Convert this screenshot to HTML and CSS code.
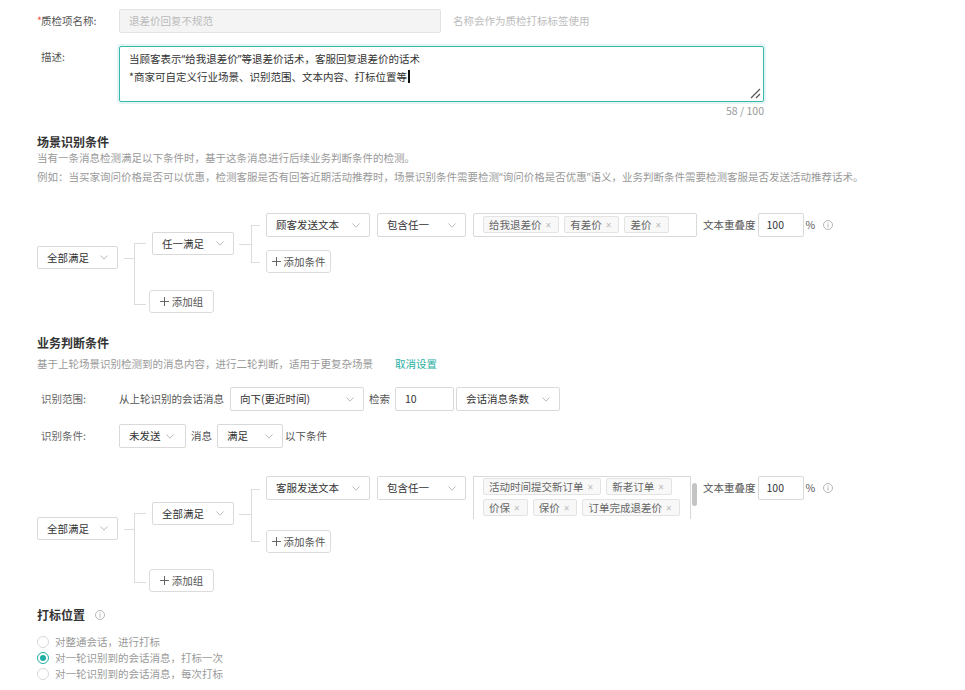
FILE: index.html
```html
<!DOCTYPE html>
<html lang="zh-CN">
<head>
<meta charset="utf-8">
<title>质检项</title>
<link rel="stylesheet" href="styles.css">
</head>
<body>
<div class="page">
  <div class="row row-name">
    <div class="label"><span class="req">*</span>质检项名称:</div>
    <div class="input input-disabled">退差价回复不规范</div>
    <div class="hint">名称会作为质检打标标签使用</div>
  </div>

  <div class="row row-desc">
    <div class="label label-top">描述:</div>
    <div class="textarea">
      <div class="ta-text">
        <div>当顾客表示<span class="q">“</span>给我退差价<span class="q">”</span>等退差价话术，客服回复退差价的话术</div>
        <div>*商家可自定义行业场景、识别范围、文本内容、打标位置等<span class="caret"></span></div>
      </div>
      <svg class="resize" width="12" height="12" viewBox="0 0 12 12"><path d="M11 2L2 11M11 7L7 11" stroke="#555" stroke-width="1.2" fill="none"/></svg>
    </div>
  </div>
  <div class="counter">58 / 100</div>

  <h3 class="title t-scene">场景识别条件</h3>
  <div class="desc">
    <div>当有一条消息检测满足以下条件时，基于这条消息进行后续业务判断条件的检测。</div>
    <div>例如：当买家询问价格是否可以优惠，检测客服是否有回答近期活动推荐时，场景识别条件需要检测<span class="q">“</span>询问价格是否优惠<span class="q">”</span>语义，业务判断条件需要检测客服是否发送活动推荐话术。</div>
  </div>

  <div class="tree t1">
    <div class="sel root">全部满足<svg class="arr" width="8" height="5" viewBox="0 0 8 5"><path d="M0.5 0.5L4 4.2L7.5 0.5" fill="none" stroke="#bbb"/></svg></div>
    <div class="hl hl-root"></div>
    <div class="br br-outer"></div>
    <div class="col">
      <div class="grp">
        <div class="sel grp-sel">任一满足<svg class="arr" width="8" height="5" viewBox="0 0 8 5"><path d="M0.5 0.5L4 4.2L7.5 0.5" fill="none" stroke="#bbb"/></svg></div>
        <div class="hl hl-grp"></div>
        <div class="br br-inner"></div>
        <div class="conds">
          <div class="cond-row">
            <div class="sel sel-field">顾客发送文本<svg class="arr" width="8" height="5" viewBox="0 0 8 5"><path d="M0.5 0.5L4 4.2L7.5 0.5" fill="none" stroke="#bbb"/></svg></div>
            <div class="sel sel-op">包含任一<svg class="arr" width="8" height="5" viewBox="0 0 8 5"><path d="M0.5 0.5L4 4.2L7.5 0.5" fill="none" stroke="#bbb"/></svg></div>
            <div class="tags tags-single">
              <span class="tag">给我退差价<span class="x">×</span></span>
              <span class="tag">有差价<span class="x">×</span></span>
              <span class="tag">差价<span class="x">×</span></span>
            </div>
            <div class="overlap">文本重叠度</div>
            <div class="input num">100</div>
            <div class="pct">%</div>
            <svg class="info" width="10" height="10" viewBox="0 0 10 10"><circle cx="5" cy="5" r="4.5" fill="none" stroke="#b5b5b5"/><path d="M5 4.2v3.3" stroke="#b5b5b5"/><circle cx="5" cy="2.9" r="0.6" fill="#b5b5b5"/></svg>
          </div>
          <div class="btn add-cond"><svg width="9" height="9" viewBox="0 0 9 9"><path d="M4.5 0v9M0 4.5h9" stroke="#666"/></svg><span>添加条件</span></div>
        </div>
      </div>
      <div class="btn add-group"><svg width="9" height="9" viewBox="0 0 9 9"><path d="M4.5 0v9M0 4.5h9" stroke="#666"/></svg><span>添加组</span></div>
    </div>
  </div>

  <h3 class="title t-biz">业务判断条件</h3>
  <div class="desc desc2">基于上轮场景识别检测到的消息内容，进行二轮判断，适用于更复杂场景<span class="link">取消设置</span></div>

  <div class="row row-range">
    <div class="label label-muted">识别范围:</div>
    <div class="text">从上轮识别的会话消息</div>
    <div class="sel sel-dir">向下(更近时间)<svg class="arr" width="8" height="5" viewBox="0 0 8 5"><path d="M0.5 0.5L4 4.2L7.5 0.5" fill="none" stroke="#bbb"/></svg></div>
    <div class="text kw">检索</div>
    <div class="input num10">10</div>
    <div class="sel sel-unit">会话消息条数<svg class="arr" width="8" height="5" viewBox="0 0 8 5"><path d="M0.5 0.5L4 4.2L7.5 0.5" fill="none" stroke="#bbb"/></svg></div>
  </div>

  <div class="row row-cond">
    <div class="label label-muted">识别条件:</div>
    <div class="sel sel-send">未发送<svg class="arr" width="8" height="5" viewBox="0 0 8 5"><path d="M0.5 0.5L4 4.2L7.5 0.5" fill="none" stroke="#bbb"/></svg></div>
    <div class="text kw">消息</div>
    <div class="sel sel-match">满足<svg class="arr" width="8" height="5" viewBox="0 0 8 5"><path d="M0.5 0.5L4 4.2L7.5 0.5" fill="none" stroke="#bbb"/></svg></div>
    <div class="text tail">以下条件</div>
  </div>

  <div class="tree t2">
    <div class="sel root">全部满足<svg class="arr" width="8" height="5" viewBox="0 0 8 5"><path d="M0.5 0.5L4 4.2L7.5 0.5" fill="none" stroke="#bbb"/></svg></div>
    <div class="hl hl-root"></div>
    <div class="br br-outer"></div>
    <div class="col">
      <div class="grp">
        <div class="sel grp-sel">全部满足<svg class="arr" width="8" height="5" viewBox="0 0 8 5"><path d="M0.5 0.5L4 4.2L7.5 0.5" fill="none" stroke="#bbb"/></svg></div>
        <div class="hl hl-grp"></div>
        <div class="br br-inner"></div>
        <div class="conds">
          <div class="cond-row">
            <div class="sel sel-field">客服发送文本<svg class="arr" width="8" height="5" viewBox="0 0 8 5"><path d="M0.5 0.5L4 4.2L7.5 0.5" fill="none" stroke="#bbb"/></svg></div>
            <div class="sel sel-op">包含任一<svg class="arr" width="8" height="5" viewBox="0 0 8 5"><path d="M0.5 0.5L4 4.2L7.5 0.5" fill="none" stroke="#bbb"/></svg></div>
            <div class="tags-scroll">
              <div class="tags-box">
                <span class="tag">活动时间提交新订单<span class="x">×</span></span>
                <span class="tag">新老订单<span class="x">×</span></span>
                <span class="tag">价保<span class="x">×</span></span>
                <span class="tag">保价<span class="x">×</span></span>
                <span class="tag">订单完成退差价<span class="x">×</span></span>
              </div>
              <div class="thumb"></div>
            </div>
            <div class="overlap">文本重叠度</div>
            <div class="input num">100</div>
            <div class="pct">%</div>
            <svg class="info" width="10" height="10" viewBox="0 0 10 10"><circle cx="5" cy="5" r="4.5" fill="none" stroke="#b5b5b5"/><path d="M5 4.2v3.3" stroke="#b5b5b5"/><circle cx="5" cy="2.9" r="0.6" fill="#b5b5b5"/></svg>
          </div>
          <div class="btn add-cond"><svg width="9" height="9" viewBox="0 0 9 9"><path d="M4.5 0v9M0 4.5h9" stroke="#666"/></svg><span>添加条件</span></div>
        </div>
      </div>
      <div class="btn add-group"><svg width="9" height="9" viewBox="0 0 9 9"><path d="M4.5 0v9M0 4.5h9" stroke="#666"/></svg><span>添加组</span></div>
    </div>
  </div>

  <div class="title-row">
    <h3 class="title t-mark">打标位置</h3>
    <svg class="info info-title" width="10" height="10" viewBox="0 0 10 10"><circle cx="5" cy="5" r="4.5" fill="none" stroke="#b5b5b5"/><path d="M5 4.2v3.3" stroke="#b5b5b5"/><circle cx="5" cy="2.9" r="0.6" fill="#b5b5b5"/></svg>
  </div>
  <div class="radios">
    <div class="radio"><span class="dot"></span>对整通会话，进行打标</div>
    <div class="radio checked"><span class="dot"></span>对一轮识别到的会话消息，打标一次</div>
    <div class="radio"><span class="dot"></span>对一轮识别到的会话消息，每次打标</div>
  </div>
</div>
</body>
</html>
```

FILE: styles.css
```css
* { box-sizing: border-box; }

body {
  margin: 0;
  background: #fff;
  color: #333;
  font-family: "Noto Sans CJK SC", "Noto Sans", sans-serif;
  font-size: 10.5px;
  line-height: 14px;
}

.page { padding: 9px 0 0 37px; }

.q { font-family: "Noto Sans", sans-serif; }

.row { display: flex; align-items: center; }

.label {
  flex: none;
  width: 82px;
  padding-left: 4px;
  color: #555;
}
.req { color: #f0524f; margin-left: -4px; margin-right: -1px; }
.label-top { padding-top: 3px; line-height: 16px; }
.label-muted { color: #666; }

.input {
  flex: none;
  display: flex;
  align-items: center;
  height: 24px;
  border: 1px solid #d9d9d9;
  border-radius: 2px;
  background: #fff;
  color: #333;
}
.input-disabled {
  width: 322px;
  padding-left: 9px;
  background: #f4f4f4;
  border-color: #e3e3e3;
  color: #bbb;
}
.hint { margin-left: 12px; color: #bbb; }

.row-desc { margin-top: 13px; align-items: flex-start; }

.textarea {
  flex: none;
  display: flex;
  width: 645px;
  height: 56px;
  padding: 3px 2px 2px 9px;
  border: 1px solid #35b8ad;
  border-radius: 2px;
  box-shadow: 0 0 0 2px rgba(53, 184, 173, 0.14);
}
.ta-text { flex: 1; line-height: 17px; color: #333; }
.caret {
  display: inline-block;
  width: 2px;
  height: 13px;
  margin-left: 1px;
  background: #111;
  vertical-align: -2px;
}
.resize { align-self: flex-end; flex: none; }

.counter {
  width: 727px;
  margin-top: 2px;
  text-align: right;
  color: #999;
}

.title {
  margin: 0;
  font-size: 12px;
  font-weight: 700;
  line-height: 14px;
  color: #333;
}
.t-scene { margin-top: 17px; }
.t-biz { margin-top: 23px; }

.desc { margin-top: -1px; line-height: 19px; color: #999; }
.desc2 { margin-top: 4px; }
.link { margin-left: 22px; color: #1fafa3; }

/* condition tree */
.tree { display: flex; align-items: flex-start; }
.t1 { margin-top: 26px; }
.t2 { margin-top: 28px; }

.sel {
  flex: none;
  display: flex;
  align-items: center;
  justify-content: space-between;
  height: 24px;
  padding: 0 9px;
  border: 1px solid #d9d9d9;
  border-radius: 2px;
  background: #fff;
  color: #333;
  white-space: nowrap;
}
.arr { flex: none; }

.hl { flex: none; height: 1px; border-top: 1px solid #dcdcdc; }
.br { flex: none; border: 1px solid #dcdcdc; border-right: none; }

.root { width: 81px; height: 23px; }
.hl-root { width: 10px; margin-left: 6px; }
.br-outer { width: 12px; }
.col { display: flex; flex-direction: column; align-items: flex-start; }
.grp { display: flex; align-items: flex-start; }
.grp-sel { width: 82px; height: 23px; margin-left: 6px; }
.hl-grp { width: 12px; margin-left: 5px; }
.br-inner { width: 9px; }
.conds { display: flex; flex-direction: column; align-items: flex-start; margin-left: 6px; }

.t1 .root { margin-top: 33px; }
.t1 .hl-root { margin-top: 45px; }
.t1 .br-outer { margin-top: 30px; height: 62px; }
.t1 .grp-sel { margin-top: 19px; }
.t1 .hl-grp { margin-top: 31px; }
.t1 .br-inner { margin-top: 12px; height: 38px; }

.t2 .root { margin-top: 41px; }
.t2 .hl-root { margin-top: 53px; }
.t2 .br-outer { margin-top: 37px; height: 70px; }
.t2 .grp-sel { margin-top: 26px; }
.t2 .hl-grp { margin-top: 38px; }
.t2 .br-inner { margin-top: 13px; height: 53px; }

.cond-row { display: flex; align-items: flex-start; }
.sel-field { width: 104px; }
.sel-op { width: 89px; margin-left: 7px; }

.tags-single {
  flex: none;
  display: flex;
  align-items: flex-start;
  gap: 5px;
  width: 224px;
  height: 24px;
  margin-left: 7px;
  padding: 2px 0 0 9px;
  border: 1px solid #d9d9d9;
  border-radius: 2px;
}
.tags-scroll {
  flex: none;
  display: flex;
  align-items: flex-start;
  width: 224px;
  height: 43px;
  margin-left: 7px;
}
.tags-box {
  display: flex;
  flex-wrap: wrap;
  align-content: flex-start;
  gap: 4px 5px;
  width: 218px;
  height: 43px;
  padding: 1px 0 0 9px;
  border: 1px solid #d9d9d9;
  border-bottom: none;
  overflow: hidden;
}
.thumb {
  width: 5px;
  height: 23px;
  margin: 7px 0 0 1px;
  border-radius: 3px;
  background: #c4c4c4;
}
.tag {
  flex: none;
  display: flex;
  align-items: center;
  height: 17px;
  padding: 0 7px 0 5px;
  border: 1px solid #e3e3e3;
  border-radius: 2px;
  background: #f8f8f8;
  color: #666;
  white-space: nowrap;
}
.x {
  margin-left: 4px;
  font-family: "Noto Sans", sans-serif;
  font-size: 10px;
  color: #bbb;
}

.overlap { margin-left: 6px; line-height: 24px; color: #555; white-space: nowrap; }
.num { width: 46px; margin-left: 2px; padding-left: 8px; }
.pct { margin-left: 2px; line-height: 24px; color: #555; }
.info { flex: none; margin: 7px 0 0 8px; }

.btn {
  flex: none;
  display: flex;
  align-items: center;
  justify-content: center;
  width: 65px;
  height: 23px;
  border: 1px solid #dcdcdc;
  border-radius: 3px;
  background: #fff;
  color: #555;
}
.btn span { margin-left: 3px; }
.t1 .add-cond { margin-top: 13px; }
.t2 .add-cond { margin-top: 11px; }
.add-group { margin-left: 3px; }
.t1 .add-group { margin-top: 17px; }
.t2 .add-group { margin-top: 16px; }

/* business rows */
.text { color: #555; white-space: nowrap; }
.row-range { margin-top: 14px; height: 24px; }
.row-cond { margin-top: 13px; height: 24px; }
.sel-dir { width: 134px; margin-left: 6px; }
.kw { margin-left: 5px; }
.num10 { width: 59px; margin-left: 5px; padding-left: 9px; }
.sel-unit { width: 104px; margin-left: 2px; }
.sel-send { width: 67px; padding-right: 11px; }
.sel-match { width: 66px; margin-left: 5px; }
.tail { margin-left: 2px; }

/* mark position */
.title-row { display: flex; align-items: center; margin-top: 16px; }
.info-title { margin: 0 0 0 10px; }
.radios { margin-top: 12px; }
.radio {
  display: flex;
  align-items: center;
  height: 16px;
  color: #999;
}
.dot {
  flex: none;
  display: flex;
  align-items: center;
  justify-content: center;
  width: 12px;
  height: 12px;
  margin-right: 6px;
  border: 1px solid #d9d9d9;
  border-radius: 50%;
  background: #fff;
}
.checked .dot { border-color: #1fafa3; }
.checked .dot::after {
  content: "";
  width: 6px;
  height: 6px;
  border-radius: 50%;
  background: #1fafa3;
}
```
